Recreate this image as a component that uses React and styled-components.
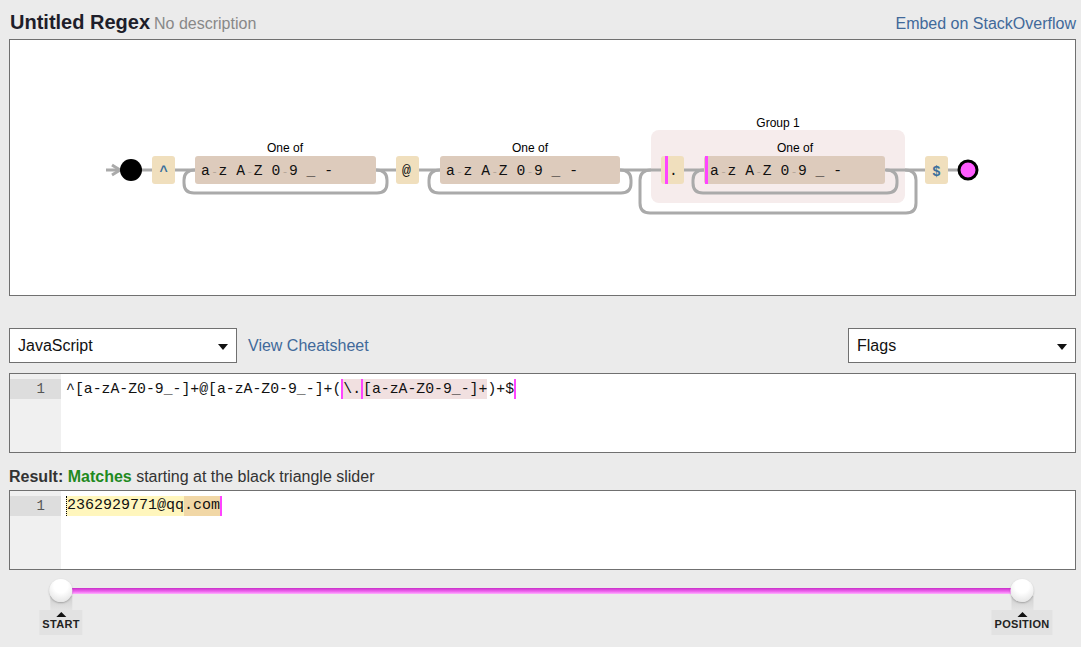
import React from 'react'
import styled, { createGlobalStyle } from 'styled-components'

const SANS = "'Liberation Sans', Arial, sans-serif"
const MONO = "'Liberation Mono', 'Courier New', monospace"
const CLASS_CHARS = 'a-z A-Z 0-9 _ -'.split('')

// one "a-z A-Z 0-9 _ -" label, every char placed on the mono grid
function ClassText({ x, y }) {
  return (
    <text y={y} fontFamily={MONO} fontSize="14.67">
      {CLASS_CHARS.map((c, i) => {
        const rangeDash = c === '-' && i !== 14
        return (
          <tspan
            key={i}
            x={x + i * 8.8 + (rangeDash ? 1.5 : 0)}
            fill={rangeDash ? '#b3a598' : '#111'}
            fontSize={rangeDash ? 11 : 14.67}
          >
            {c}
          </tspan>
        )
      })}
    </text>
  )
}

const loop = (x1, x2, yb) =>
  `M ${x2 - 11} 170 Q ${x2} 170 ${x2} 180 V ${yb - 10} Q ${x2} ${yb} ${x2 - 10} ${yb} H ${x1 + 10} Q ${x1} ${yb} ${x1} ${yb - 10} V 180 Q ${x1} 170 ${x1 + 11} 170`

function Diagram() {
  return (
    <svg width="1065" height="255" viewBox="10 40 1065 255">
      <rect x="651" y="130" width="254" height="73" rx="8" fill="#f6ecec" />
      <g fill="none" stroke="#aaa" strokeWidth="3">
        <line x1="106" y1="170" x2="958" y2="170" />
        <polyline points="112,165 120,170 112,175" />
        <path d={loop(184, 387, 193)} />
        <path d={loop(429, 631, 193)} />
        <path d={loop(693, 897, 193)} />
        <path d={loop(640, 916, 213)} />
      </g>
      <circle cx="131" cy="170" r="11" fill="#000" />
      <circle cx="968" cy="170" r="9" fill="#ff5cff" stroke="#000" strokeWidth="3" />

      <g fontFamily={SANS} fontSize="12" fill="#000" textAnchor="middle">
        <text x="778" y="127">Group 1</text>
        <text x="285" y="152">One of</text>
        <text x="530" y="152">One of</text>
        <text x="795" y="152">One of</text>
      </g>

      <g fill="#f0dfbd">
        <rect x="152" y="156" width="23" height="28" rx="3" />
        <rect x="396" y="156" width="23" height="28" rx="3" />
        <rect x="661" y="156" width="23" height="28" rx="3" />
        <rect x="925" y="156" width="23" height="28" rx="3" />
      </g>
      <g fill="#ddcbbc">
        <rect x="195" y="156" width="181" height="28" rx="3" />
        <rect x="440" y="156" width="180" height="28" rx="3" />
        <rect x="704" y="156" width="181" height="28" rx="3" />
      </g>
      <rect x="665" y="156" width="3" height="28" fill="#ff44ff" />
      <rect x="705" y="156" width="3" height="28" fill="#ff44ff" />

      <g fontFamily={SANS} fontWeight="bold" fontSize="14" fill="#3a6f9c" textAnchor="middle">
        <text x="163.5" y="176">^</text>
        <text x="936.5" y="176">$</text>
      </g>
      <g fontFamily={MONO} fontSize="14.67" fill="#111">
        <text x="402" y="175">@</text>
        <text x="669" y="175">.</text>
      </g>
      <ClassText x={201} y={175} />
      <ClassText x={446} y={175} />
      <ClassText x={710} y={175} />
    </svg>
  )
}

function App() {
  return (
    <Page>
      <GlobalStyle />
      <Header>
        <TitleGroup>
          <Title>Untitled Regex</Title>
          <Description>No description</Description>
        </TitleGroup>
        <Link>Embed on StackOverflow</Link>
      </Header>

      <DiagramBox>
        <Diagram />
      </DiagramBox>

      <Toolbar>
        <ToolGroup>
          <Select>
            JavaScript
            <Caret />
          </Select>
          <Link>View Cheatsheet</Link>
        </ToolGroup>
        <Select>
          Flags
          <Caret />
        </Select>
      </Toolbar>

      <Editor $gap={10}>
        <Gutter>
          <LineNo>1</LineNo>
        </Gutter>
        <Code $size={14.8}>
          <span>^[a-zA-Z0-9_-]+@[a-zA-Z0-9_-]+(</span>
          <Marker />
          <Group>
            \.
            <Marker />
            [a-zA-Z0-9_-]+
          </Group>
          <span>)+$</span>
          <Marker />
        </Code>
      </Editor>

      <ResultLabel>
        <strong>Result: </strong>
        <Matches>Matches</Matches> starting at the black triangle slider
      </ResultLabel>

      <Editor>
        <Gutter>
          <LineNo>1</LineNo>
        </Gutter>
        <Code $size={15}>
          <Hit $first>2362929771@qq</Hit>
          <Hit $tone="#f1d7a6">.com</Hit>
          <Marker />
        </Code>
      </Editor>

      <Slider>
        <Track>
          <Handle $side="left">
            <Knob />
            <Stem />
            <HandleLabel>
              <Arrow />
              START
            </HandleLabel>
          </Handle>
          <Handle $side="right">
            <Knob />
            <Stem />
            <HandleLabel>
              <Arrow />
              POSITION
            </HandleLabel>
          </Handle>
        </Track>
      </Slider>
    </Page>
  )
}

const GlobalStyle = createGlobalStyle`
  * {
    box-sizing: border-box;
  }
  body {
    margin: 0;
    background: #ebebeb;
    font-family: ${SANS};
    color: #222;
  }
`

const Page = styled.div`
  width: 1081px;
  height: 647px;
  padding: 0 5px 0 9px;
  overflow: hidden;
`

const Header = styled.div`
  display: flex;
  justify-content: space-between;
  align-items: baseline;
  height: 39px;
  padding-top: 10px;
  line-height: 24px;
`

const TitleGroup = styled.div`
  display: flex;
  align-items: baseline;
  gap: 4px;
  padding-left: 1px;
`

const Title = styled.span`
  font-size: 20px;
  font-weight: bold;
  color: #1e1e2a;
`

const Description = styled.span`
  font-size: 16px;
  color: #888;
`

const Link = styled.span`
  font-size: 16px;
  color: #41699a;
`

const DiagramBox = styled.div`
  height: 257px;
  background: #fff;
  border: 1px solid #707070;
  overflow: hidden;
  svg {
    display: block;
  }
`

const Toolbar = styled.div`
  display: flex;
  justify-content: space-between;
  margin-top: 32px;
`

const ToolGroup = styled.div`
  display: flex;
  align-items: center;
  gap: 11px;
`

const Select = styled.div`
  display: flex;
  align-items: center;
  justify-content: space-between;
  width: 228px;
  height: 35px;
  padding: 0 8px 0 8px;
  background: #fff;
  border: 1px solid #707070;
  font-size: 16px;
  color: #111;
`

const Caret = styled.span`
  width: 0;
  height: 0;
  margin-top: 3px;
  border-left: 5px solid transparent;
  border-right: 5px solid transparent;
  border-top: 6px solid #111;
`

const Editor = styled.div`
  display: flex;
  height: 80px;
  margin-top: ${(p) => p.$gap || 0}px;
  background: #fff;
  border: 1px solid #707070;
`

const Gutter = styled.div`
  width: 51px;
  padding-top: 5px;
  background: #f0f0f0;
`

const LineNo = styled.div`
  height: 20px;
  padding-right: 16px;
  background: #dddddd;
  text-align: right;
  font-family: ${MONO};
  font-size: 14px;
  line-height: 20px;
  color: #555;
`

const Code = styled.div`
  display: flex;
  align-items: stretch;
  height: 20px;
  margin-top: 5px;
  padding-left: 5px;
  font-family: ${MONO};
  font-size: ${(p) => p.$size}px;
  line-height: 20px;
  color: #111;
  white-space: pre;
`

const Marker = styled.span`
  width: 2px;
  background: #ff44ff;
`

const Group = styled.span`
  display: flex;
  background: #f1e0e0;
`

const Hit = styled.span`
  background: ${(p) => p.$tone || '#fff6bd'};
  border-left: ${(p) => (p.$first ? '1px dotted #000' : 'none')};
`

const ResultLabel = styled.div`
  margin-top: 14px;
  height: 23px;
  font-size: 16px;
  line-height: 20px;
  color: #333;
  strong {
    color: #333;
  }
`

const Matches = styled.strong`
  && {
    color: #1f8a1f;
  }
`

const Slider = styled.div`
  position: relative;
  height: 77px;
`

const Track = styled.div`
  position: absolute;
  left: 52px;
  right: 54px;
  top: 18px;
  height: 6px;
  background: linear-gradient(#c92ec9, #f06af0 60%, #ffb0ff);
`

const Handle = styled.div`
  position: absolute;
  top: -9px;
  ${(p) => (p.$side === 'left' ? 'left: 0;' : 'right: 0;')}
  transform: translateX(${(p) => (p.$side === 'left' ? '-50%' : '50%')});
  display: flex;
  flex-direction: column;
  align-items: center;
`

const Knob = styled.div`
  width: 23px;
  height: 23px;
  border-radius: 50%;
  background: radial-gradient(circle at 50% 30%, #ffffff 35%, #dcdcdc 100%);
  box-shadow: 0 1px 2px rgba(0, 0, 0, 0.25);
  position: relative;
  z-index: 1;
`

const Stem = styled.div`
  width: 22px;
  height: 14px;
  margin-top: -6px;
  background: linear-gradient(#cfcfcf, #e4e4e4);
`

const HandleLabel = styled.div`
  display: flex;
  flex-direction: column;
  align-items: center;
  padding: 2px 3px 4px;
  background: #e2e2e2;
  font-size: 11px;
  font-weight: bold;
  letter-spacing: 0.3px;
  color: #222;
  line-height: 13px;
`

const Arrow = styled.span`
  width: 0;
  height: 0;
  margin-bottom: 1px;
  border-left: 5px solid transparent;
  border-right: 5px solid transparent;
  border-bottom: 5px solid #111;
`

export default App
